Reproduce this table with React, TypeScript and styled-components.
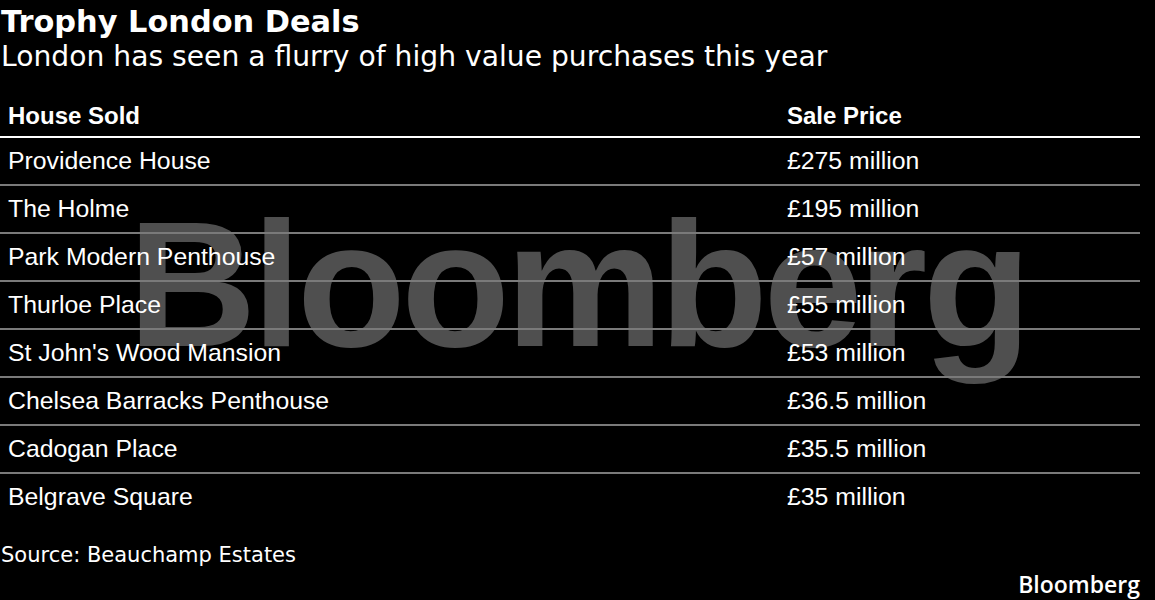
import React from "react";
import styled, { createGlobalStyle } from "styled-components";

const GlobalStyle = createGlobalStyle`
  html, body {
    margin: 0;
    padding: 0;
    background: #000;
  }
  body {
    width: 1155px;
    height: 600px;
    overflow: hidden;
  }
`;

type Deal = { house: string; price: string };

const deals: Deal[] = [
  { house: "Providence House", price: "£275 million" },
  { house: "The Holme", price: "£195 million" },
  { house: "Park Modern Penthouse", price: "£57 million" },
  { house: "Thurloe Place", price: "£55 million" },
  { house: "St John's Wood Mansion", price: "£53 million" },
  { house: "Chelsea Barracks Penthouse", price: "£36.5 million" },
  { house: "Cadogan Place", price: "£35.5 million" },
  { house: "Belgrave Square", price: "£35 million" },
];

export default function App() {
  return (
    <>
      <GlobalStyle />
      <Page>
        <Heading>
          <Title>Trophy London Deals</Title>
          <Subtitle>London has seen a flurry of high value purchases this year</Subtitle>
        </Heading>
        <TableWrap>
          <Watermark aria-hidden>Bloomberg</Watermark>
          <Table>
            <HeadRow>
              <HeadCell>House Sold</HeadCell>
              <HeadCell>Sale Price</HeadCell>
            </HeadRow>
            {deals.map((d, i) => (
              <Row key={d.house} last={i === deals.length - 1}>
                <Cell>{d.house}</Cell>
                <Cell>{d.price}</Cell>
              </Row>
            ))}
          </Table>
        </TableWrap>
        <Source>Source: Beauchamp Estates</Source>
        <Footer>
          <Logo>Bloomberg</Logo>
        </Footer>
      </Page>
    </>
  );
}

const Page = styled.div`
  width: 1155px;
  height: 600px;
  background: #000;
  color: #fff;
  display: flex;
  flex-direction: column;
`;

const Heading = styled.div`
  display: flex;
  flex-direction: column;
  padding-left: 1px;
`;

const Title = styled.div`
  font-family: "DejaVu Sans", sans-serif;
  font-weight: bold;
  font-size: 30.4px;
  line-height: 36px;
  margin-top: 4px;
`;

const Subtitle = styled.div`
  font-family: "DejaVu Sans", sans-serif;
  font-size: 28.2px;
  line-height: 34px;
`;

const TableWrap = styled.div`
  position: relative;
  width: 1140px;
  margin-top: 22px;
`;

const Watermark = styled.div`
  position: absolute;
  left: 128px;
  top: 100px;
  font-family: "Liberation Sans", Arial, sans-serif;
  font-weight: bold;
  font-size: 178px;
  line-height: 1;
  letter-spacing: -4.5px;
  color: #4f4f4f;
  z-index: 0;
  white-space: nowrap;
`;

const Table = styled.div`
  position: relative;
  z-index: 1;
  display: flex;
  flex-direction: column;
`;

const HeadRow = styled.div`
  display: grid;
  grid-template-columns: 779px 1fr;
  align-items: center;
  height: 40px;
  border-bottom: 2px solid #fff;
`;

const HeadCell = styled.div`
  padding-left: 8px;
  font-family: "Liberation Sans", Arial, sans-serif;
  font-weight: bold;
  font-size: 24px;
`;

const Row = styled.div<{ last: boolean }>`
  display: grid;
  grid-template-columns: 779px 1fr;
  align-items: center;
  height: 46px;
  border-bottom: ${({ last }) => (last ? "2px solid transparent" : "2px solid #7a7a7a")};
`;

const Cell = styled.div`
  padding-left: 8px;
  font-family: "Liberation Sans", Arial, sans-serif;
  font-size: 24.8px;
`;

const Source = styled.div`
  margin-top: 21px;
  padding-left: 1px;
  font-family: "DejaVu Sans", sans-serif;
  font-size: 21px;
  line-height: 24px;
`;

const Footer = styled.div`
  display: flex;
  justify-content: flex-end;
  width: 1140px;
  margin-top: 4px;
`;

const Logo = styled.div`
  font-family: "Open Sans", sans-serif;
  font-weight: 600;
  font-size: 23px;
  line-height: 26px;
`;
